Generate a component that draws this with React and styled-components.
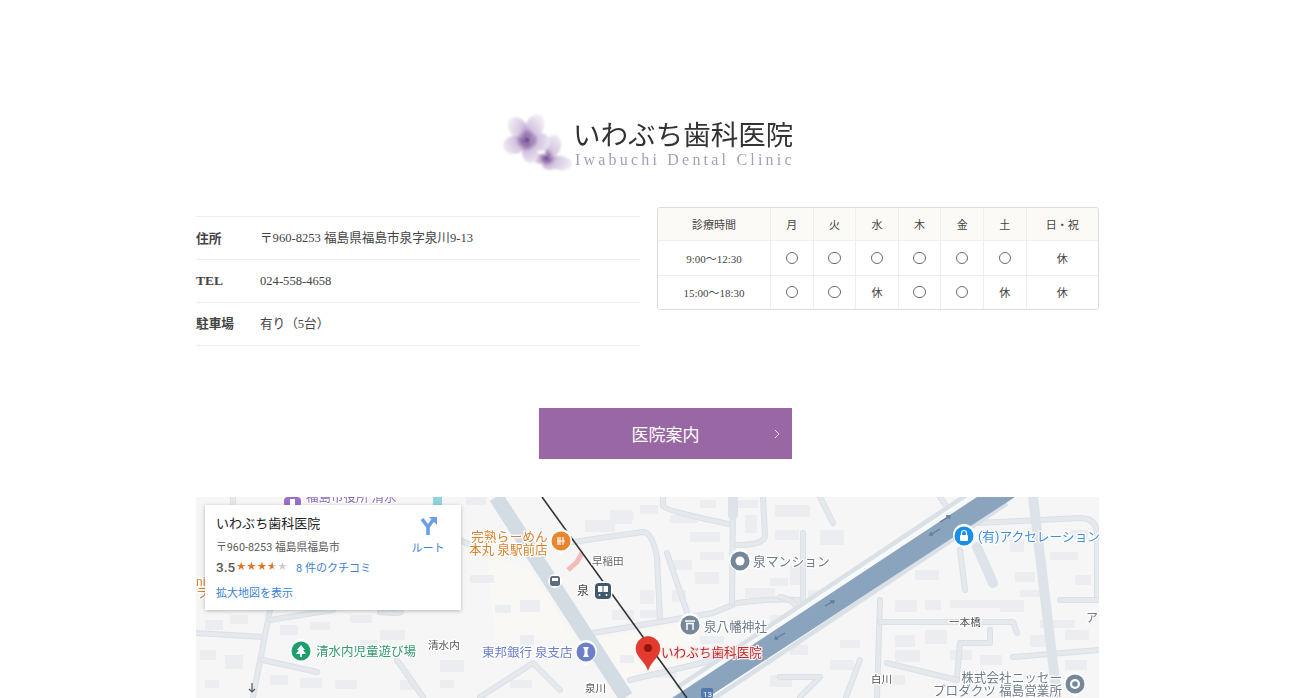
import React from 'react';
import styled, { createGlobalStyle } from 'styled-components';

const Global = createGlobalStyle`
  html, body { margin: 0; padding: 0; background: #fff; overflow: hidden; }
  body { font-family: "Liberation Serif", "Noto Sans CJK JP", serif; color: #444; }
`;
const Page = styled.div`
  width: 903px; margin-left: 196px; padding-top: 113px; height: 585px;
`;
const Logo = styled.div`
  display: flex; height: 59px; margin-left: 307px; width: 295px;
`;
const LogoText = styled.div`
  display: flex; flex-direction: column; padding-top: 3px;
`;
const LogoTitle = styled.div`
  font-size: 27.5px; line-height: 35px; color: #333; white-space: nowrap; font-weight: 400;
  font-family: "Noto Sans CJK JP", sans-serif; filter: blur(.3px);
`;
const LogoSub = styled.div`
  font-size: 16px; line-height: 17px; letter-spacing: 3.2px; color: #a89cb9; white-space: nowrap; margin-left: 2px; filter: blur(.3px);
`;
const InfoRow = styled.div`
  display: flex; justify-content: space-between; margin-top: 35px; height: 138px;
`;
const Details = styled.table`
  width: 444px; height: 130px; margin-top: 9px; border-collapse: collapse; font-size: 12.6px; color: #444;
  border-top: 1px solid #eee; table-layout: fixed;
`;
const DetailRow = styled.tr`
  border-bottom: 1px solid #eee; height: 43px;
`;
const DetailHead = styled.th`
  width: 64px; padding: 0 0 ${p => p.$lift || 0}px; text-align: left; font-weight: 700; font-size: ${p => p.$s || 12.7}px; color: #444;
`;
const DetailValue = styled.td`
  padding: 0 0 ${p => p.$lift || 0}px;
`;
const Hours = styled.table`
  width: 442px; height: 103px; border-collapse: separate; border-spacing: 0; table-layout: fixed;
  border: 1px solid #ddd; border-radius: 3px; font-size: 11px; color: #444; overflow: hidden;
`;
const Cell = styled.td`
  padding: 0; text-align: center; border-left: ${p => p.$first ? 'none' : '1px solid #eee'};
  border-top: ${p => p.$top ? 'none' : '1px solid #eee'};
  background: ${p => p.$head ? '#fcfaf6' : '#fff'};
`;
const Circle = styled.span`
  display: inline-block; width: 10.5px; height: 10.5px; border: 1px solid #6a6a6a; border-radius: 50%; vertical-align: middle; margin-top: -3px;
`;
const Cta = styled.a`
  position: relative; display: flex; align-items: center; justify-content: center;
  width: 253px; height: 51px; margin: 63px 0 0 343px; background: #9a67a5; color: #fff; font-size: 17px;
`;
const CtaArrow = styled.svg`
  position: absolute; right: 11px; top: 21px; width: 8px; height: 10px;
`;
const MapBox = styled.div`
  position: relative; width: 903px; height: 201px; margin-top: 38px; overflow: hidden; background: #f5f5f6;
  font-family: Roboto, "Noto Sans CJK JP", sans-serif;
`;
const MapSvg = styled.svg`
  display: block; width: 903px; height: 201px; filter: blur(.35px);
`;
const MapText = styled.text`
  font-family: Roboto, "Noto Sans CJK JP", sans-serif;
  font-size: ${p => p.$s || 12.5}px; fill: ${p => p.$c || '#666'};
  stroke: ${p => p.$h || '#fff'}; stroke-width: 2.5px; paint-order: stroke; stroke-linejoin: round;
`;
const Card = styled.div`
  position: absolute; left: 9px; top: 8px; width: 256px; height: 105px; background: #fff;
  box-shadow: 0 1px 4px rgba(0,0,0,.25); display: flex; justify-content: space-between;
  padding: 0 17px 0 11px; box-sizing: border-box;
`;
const CardMain = styled.div`
  display: flex; flex-direction: column;
`;
const CardTitle = styled.div`
  font-size: 13px; line-height: 18px; margin-top: 10px; color: #222;
`;
const CardAddress = styled.div`
  font-size: 10.8px; line-height: 14px; margin-top: 8px; color: #5b5b5b;
`;
const RatingRow = styled.div`
  display: flex; align-items: center; height: 18px; margin-top: 3px;
`;
const Score = styled.span`
  font-size: 13.5px; font-weight: 500; color: #555; width: 20px;
`;
const Stars = styled.span`
  display: flex; width: 60px; font-family: "DejaVu Sans", sans-serif; font-size: 11.5px; line-height: 1;
`;
const Star = styled.span`
  background: linear-gradient(90deg, #e7711b ${p => p.$fill}%, #ccc ${p => p.$fill}%);
  -webkit-background-clip: text; background-clip: text; color: transparent;
`;
const BlueLink = styled.a`
  font-size: 11px; color: #3a7fd5; white-space: nowrap;
`;
const LargerLink = styled(BlueLink)`
  margin-top: 10px; line-height: 15px;
`;
const Route = styled.div`
  display: flex; flex-direction: column; align-items: center; padding-top: 11px; width: 32px;
`;
const RouteIcon = styled.svg`
  width: 18px; height: 19px; margin-bottom: 4px;
`;

const days = ['月', '火', '水', '木', '金', '土'];
const rows = [
  ['9:00～12:30', [1, 1, 1, 1, 1, 1]],
  ['15:00～18:30', [1, 1, 0, 1, 1, 0]],
];

const thinRoads = [
  'M573 542L643 532Q652 532 657 557L660 620', 'M593 633L713 613L737 603Q770 598 800 600',
  'M663 497V506Q665 511 733 525', 'M733 497L732 603', 'M763 497L765 535Q765 545 737 545',
  'M667 553L693 630', 'M630 680L735 655', 'M480 697L533 663L560 690', 'M460 540L487 553',
  'M196 633L263 637', 'M270 610L253 697', 'M270 620L333 610', 'M263 660L317 672',
  'M397 660L423 697', 'M977 523L1080 518Q1097 518 1097 535V600', 'M960 550L965 590',
  'M880 600L877 697', 'M880 622H1013L1017 633', 'M990 630V643H960L957 677', 'M887 663L957 680',
  'M1013 657L1099 650', 'M820 497L833 523', 'M940 497L947 507', 'M803 533V600',
  'M780 597Q797 600 797 612', 'M780 677H820L800 697', 'M400 610Q405 615 380 612', 'M233 497V510',
  'M1099 600H1060', 'M846 697L860 660',
];
const wideRoads = ['M977 547L993 583', 'M1033 497L1057 697', 'M733 497V515'];
const b = [
  [466,497,20,8],[610,510,22,14],[640,505,18,9],[585,520,30,12],[620,512,14,8],[670,515,28,8],[700,500,16,8],[745,515,12,18],[690,532,30,10],
  [670,560,22,10],[700,552,24,8],[695,572,24,12],[738,500,20,8],[775,505,35,12],[820,530,24,15],[775,530,24,10],[790,565,12,20],[745,588,30,10],[770,578,18,8],
  [640,590,14,14],[612,610,22,10],[640,610,20,8],[672,590,14,12],[640,640,18,8],[700,636,24,8],[740,620,18,10],[770,615,25,10],[520,600,20,12],[495,605,16,8],
  [808,590,22,14],[840,583,20,14],[870,560,22,14],[900,545,16,16],[915,570,24,10],[895,600,22,12],[925,600,16,10],[950,600,60,8],[1000,600,24,12],[1015,572,20,10],
  [1050,552,28,8],[1075,575,16,10],[1010,540,14,12],[1070,530,18,8],[1040,620,35,8],[1020,590,20,7],[895,635,20,12],[925,630,22,14],[950,650,22,10],[980,655,22,10],[895,650,25,12],[1030,635,20,12],
  [1065,630,24,10],[1065,660,22,10],[970,675,30,8],[880,675,25,10],[830,660,24,10],[790,645,18,10],[840,640,20,8],[720,668,24,10],[770,675,22,12],[655,670,22,8],[620,655,14,8],
  [205,620,18,10],[230,615,18,9],[280,625,18,10],[310,622,20,8],[350,615,22,8],[380,630,25,10],[200,650,16,10],[225,655,18,14],[270,675,18,10],[300,678,22,10],[335,680,22,9],
  [205,680,14,8],[400,680,16,10],[440,660,24,12],[440,680,14,8],[510,680,22,8],[360,640,18,8],[470,575,24,8],[520,635,14,10],
];

function Pin({ x, y, c, children }) {
  return (
    <g transform={`translate(${x} ${y})`}>
      <path d="M0 14L-5 8.800A11 11 0 1 1 5 8.800Z" fill="#fff" />
      <circle r="9.500" fill={c} />
      {children}
    </g>
  );
}

function MapDrawing() {
  return (
    <MapSvg viewBox="196 497 903 201" aria-hidden="true">
      <rect x="196" y="497" width="903" height="201" fill="#f6f6f7" />
      <path d="M487 553L530 570L575 640L495 640Z" fill="#f9f8f5" />
      <path d="M590 640L700 620L690 670L610 680Z" fill="#f9f8f5" />
      {b.map(([x, y, w, h], i) => <rect key={i} x={x} y={y} width={w} height={h} rx="1" fill="#ecedf0" />)}
      <g fill="none" strokeLinecap="round" strokeLinejoin="round">
        {thinRoads.map((d, i) => (
          <g key={i}>
            <path d={d} stroke="#d9e0e6" strokeWidth="6" />
            <path d={d} stroke="#e5e9ed" strokeWidth="4" />
          </g>
        ))}
        {wideRoads.map((d, i) => <path key={i} d={d} stroke="#dde3e9" strokeWidth="10" />)}
      </g>
      <path d="M496 497L626 697" stroke="#d3dce3" strokeWidth="15" />
      <path d="M999 491L685 700" stroke="#d9e0e6" strokeWidth="34" />
      <path d="M999 491L685 700" stroke="#f8f9fa" strokeWidth="25" />
      <path d="M977 497H1015L707 698H672Z" fill="#8aa4be" />
      <path d="M940 522l10 -6m-4 0l4 0l-1 3M930 535l10 -6m-7 6l-3 0l1 -3M825 606l9 -5m-4 0l4 0l-1 3M775 639l10 -6m-7 6l-3 0l1 -3" stroke="#5f7c98" strokeWidth="1.300" fill="none" />
      <path d="M582 553L577 562L568 570" fill="none" stroke="#f4b9b9" strokeWidth="5" />
      <path d="M542 497L687 698" stroke="#333" strokeWidth="1.600" />
      <rect x="433" y="497" width="9" height="9" fill="#8fd4dc" />

      <rect x="284" y="497" width="17" height="10" rx="4" fill="#9b6fc8" />
      <rect x="290" y="499" width="5" height="6" fill="#fff" />
      <MapText x="306" y="502" $c="#8d68b8">福島市役所 清水</MapText>

      <Pin x={561} y={541} c="#e8852e"><path d="M-3 -4V4M-1 -4V4M2 -4V4M-4 0H4" stroke="#fff" strokeWidth="1.200" /></Pin>
      <MapText x="471" y="541" $c="#d9802e" $s="12.800">完熟らーめん</MapText>
      <MapText x="469" y="554" $c="#d9802e" $s="12.600">本丸 泉駅前店</MapText>

      <circle cx="555" cy="581" r="7" fill="#fff" />
      <rect x="550" y="576" width="10" height="10" rx="2.500" fill="#5c6b7d" />
      <rect x="552" y="578" width="6" height="3" fill="#fff" />
      <MapText x="592" y="565" $s="10.500">早稲田</MapText>
      <MapText x="577" y="595" $s="12" $c="#444">泉</MapText>
      <circle cx="603" cy="591" r="10" fill="#fff" />
      <rect x="595" y="583" width="16" height="16" rx="4" fill="#44586c" />
      <rect x="598" y="586" width="10" height="6" fill="#fff" />
      <path d="M603 586v6" stroke="#44586c" />
      <circle cx="599.500" cy="595" r="1" fill="#fff" /><circle cx="606.500" cy="595" r="1" fill="#fff" />

      <Pin x={740} y={561} c="#76879a"><circle r="4.500" fill="#fff" /></Pin>
      <MapText x="753" y="566" $c="#6d7c8b" $s="12.800">泉マンション</MapText>

      <Pin x={964} y={536} c="#1a8fe8">
        <rect x="-4" y="-1" width="8" height="6" rx="1" fill="#fff" />
        <path d="M-2.500 -1V-3A2.500 2.500 0 0 1 2.500 -3V-1" fill="none" stroke="#fff" strokeWidth="1.200" />
      </Pin>
      <MapText x="978" y="541" $c="#3b8ee0" $s="12.700">(有)アクセレーション</MapText>

      <Pin x={690} y={625} c="#76879a">
        <path d="M-5 -4H5M-4 -1.500H4M-3 -1.500V5M3 -1.500V5" stroke="#fff" strokeWidth="1.500" fill="none" />
      </Pin>
      <MapText x="704" y="631" $c="#6d7c8b" $s="12.600">泉八幡神社</MapText>

      <Pin x={586} y={652} c="#6b7fcb">
        <path d="M-3 -5H3L1.500 -2V2L3 5H-3L-1.500 2V-2Z" fill="#fff" />
      </Pin>
      <MapText x="482" y="657" $c="#6b7fcb" $s="12.500">東邦銀行 泉支店</MapText>

      <MapText x="661" y="657" $c="#c5292a" $h="#fbeaea" $s="12.600">いわぶち歯科医院</MapText>
      <path d="M648 670C645 661 636 657 636 648.500A12 12 0 0 1 660 648.500C660 657 651 661 648 670Z" fill="#e53a30" stroke="#c9302a" strokeWidth=".6" />
      <circle cx="648" cy="648" r="4" fill="#8f1710" />

      <rect x="701" y="688" width="12" height="10" rx="2" fill="#4f79ad" />
      <MapText x="703" y="697" $c="#fff" $h="transparent" $s="8">13</MapText>

      <Pin x={301} y={651} c="#1f9e6c">
        <path d="M0 -6L4 -1H2L5 3H1V6H-1V3H-5L-2 -1H-4Z" fill="#fff" />
      </Pin>
      <MapText x="316" y="656" $c="#2f9a6b" $s="12.500">清水内児童遊び場</MapText>
      <MapText x="428" y="649" $s="10.600" $c="#555">清水内</MapText>
      <MapText x="585" y="692" $s="10.500" $c="#555">泉川</MapText>
      <MapText x="871" y="683" $s="10.500" $c="#555">白川</MapText>
      <MapText x="949" y="626" $s="10.600" $c="#555">一本橋</MapText>
      <MapText x="1086" y="622" $s="12" $c="#6d7c8b">ア</MapText>
      <MapText x="1062" y="682" textAnchor="end" $c="#6d7c8b" $s="12.600">株式会社ニッセー</MapText>
      <MapText x="1062" y="695" textAnchor="end" $c="#6d7c8b" $s="12.600">プロダクツ 福島営業所</MapText>
      <Pin x={1075} y={684} c="#76879a"><circle r="5" fill="#fff" /><circle r="2.800" fill="#76879a" /></Pin>
      <path d="M252 683v9m-3 -3l3 3l3 -3" stroke="#555" strokeWidth="1.200" fill="none" />

      <MapText x="196" y="586" $c="#d9802e" $s="12">ni</MapText>
      <MapText x="196" y="598" $c="#d9802e" $s="12">ラ</MapText>
    </MapSvg>
  );
}

export default function App() {
  return (
    <>
      <Global />
      <Page>
        <Logo>
          <svg width="70" height="59" viewBox="0 0 70 59" aria-hidden="true">
            <defs>
              <radialGradient id="petBig" gradientUnits="userSpaceOnUse" cx="24" cy="27" r="25">
                <stop offset="0" stopColor="#8f68ab" />
                <stop offset=".45" stopColor="#d3c3de" />
                <stop offset="1" stopColor="#f1ecf4" />
              </radialGradient>
              <radialGradient id="petSmall" gradientUnits="userSpaceOnUse" cx="44" cy="45" r="24">
                <stop offset="0" stopColor="#8f68ab" />
                <stop offset=".4" stopColor="#d6c8e0" />
                <stop offset="1" stopColor="#efe9f3" />
              </radialGradient>
              <radialGradient id="core">
                <stop offset="0" stopColor="#572a7a" />
                <stop offset=".45" stopColor="#7d539b" stopOpacity=".6" />
                <stop offset="1" stopColor="#7d539b" stopOpacity="0" />
              </radialGradient>
              <filter id="soft" x="-10%" y="-10%" width="120%" height="120%"><feGaussianBlur stdDeviation="1.200" /></filter>
            </defs>
            <g filter="url(#soft)">
              <g fill="url(#petSmall)">
                <ellipse cx="50" cy="33" rx="8" ry="11" transform="rotate(15 50 33)" />
                <ellipse cx="57" cy="50" rx="12" ry="7" transform="rotate(8 57 50)" />
                <ellipse cx="47" cy="52" rx="8" ry="5" />
                <ellipse cx="37" cy="46" rx="6" ry="5" />
              </g>
              <g fill="url(#petBig)">
                <ellipse cx="15" cy="15" rx="9" ry="12" transform="rotate(-38 15 15)" />
                <ellipse cx="32" cy="13" rx="9" ry="12" transform="rotate(20 32 13)" />
                <ellipse cx="11" cy="32" rx="11" ry="9" transform="rotate(-8 11 32)" />
                <ellipse cx="38" cy="29" rx="9" ry="9" />
                <ellipse cx="27" cy="40" rx="8" ry="10" transform="rotate(-10 27 40)" />
              </g>
              <circle cx="24" cy="27" r="11" fill="url(#core)" />
              <circle cx="44" cy="45" r="7" fill="url(#core)" />
            </g>
          </svg>
          <LogoText>
            <LogoTitle>いわぶち歯科医院</LogoTitle>
            <LogoSub>Iwabuchi Dental Clinic</LogoSub>
          </LogoText>
        </Logo>
        <InfoRow>
          <Details>
            <tbody>
              <DetailRow><DetailHead $lift={2}>住所</DetailHead><DetailValue $lift={3}>〒960-8253 福島県福島市泉字泉川9-13</DetailValue></DetailRow>
              <DetailRow><DetailHead $s={13.5}>TEL</DetailHead><DetailValue>024-558-4658</DetailValue></DetailRow>
              <DetailRow><DetailHead $lift={3}>駐車場</DetailHead><DetailValue $lift={3}>有り（5台）</DetailValue></DetailRow>
            </tbody>
          </Details>
          <Hours>
            <colgroup>
              <col width="112" />
              {days.map(d => <col key={d} width="42.6" />)}
              <col />
            </colgroup>
            <tbody>
              <tr>
                <Cell $first $top $head>診療時間</Cell>
                {days.map(d => <Cell key={d} $top $head>{d}</Cell>)}
                <Cell $top $head>日・祝</Cell>
              </tr>
              {rows.map(([label, open]) => (
                <tr key={label}>
                  <Cell $first>{label}</Cell>
                  {open.map((o, i) => <Cell key={i}>{o ? <Circle /> : '休'}</Cell>)}
                  <Cell>休</Cell>
                </tr>
              ))}
            </tbody>
          </Hours>
        </InfoRow>
        <Cta>
          医院案内
          <CtaArrow viewBox="0 0 8 10" aria-hidden="true"><path d="M2 1l4 4l-4 4" fill="none" stroke="#f0e6f2" strokeWidth="1" /></CtaArrow>
        </Cta>
        <MapBox>
          <MapDrawing />
          <Card>
            <CardMain>
              <CardTitle>いわぶち歯科医院</CardTitle>
              <CardAddress>〒960-8253 福島県福島市</CardAddress>
              <RatingRow>
                <Score>3.5</Score>
                <Stars>
                  {[100, 100, 100, 60, 0].map((f, i) => <Star key={i} $fill={f}>★</Star>)}
                </Stars>
                <BlueLink>8 件のクチコミ</BlueLink>
              </RatingRow>
              <LargerLink>拡大地図を表示</LargerLink>
            </CardMain>
            <Route>
              <RouteIcon viewBox="0 0 18 19" aria-hidden="true">
                <path d="M9 19V11L3 3" fill="none" stroke="#6c9ee6" strokeWidth="3.600" />
                <path d="M9 11L14 4" fill="none" stroke="#6c9ee6" strokeWidth="3.600" />
                <path d="M10 1H18V9Z" fill="#6c9ee6" />
              </RouteIcon>
              <BlueLink>ルート</BlueLink>
            </Route>
          </Card>
        </MapBox>
      </Page>
    </>
  );
}
